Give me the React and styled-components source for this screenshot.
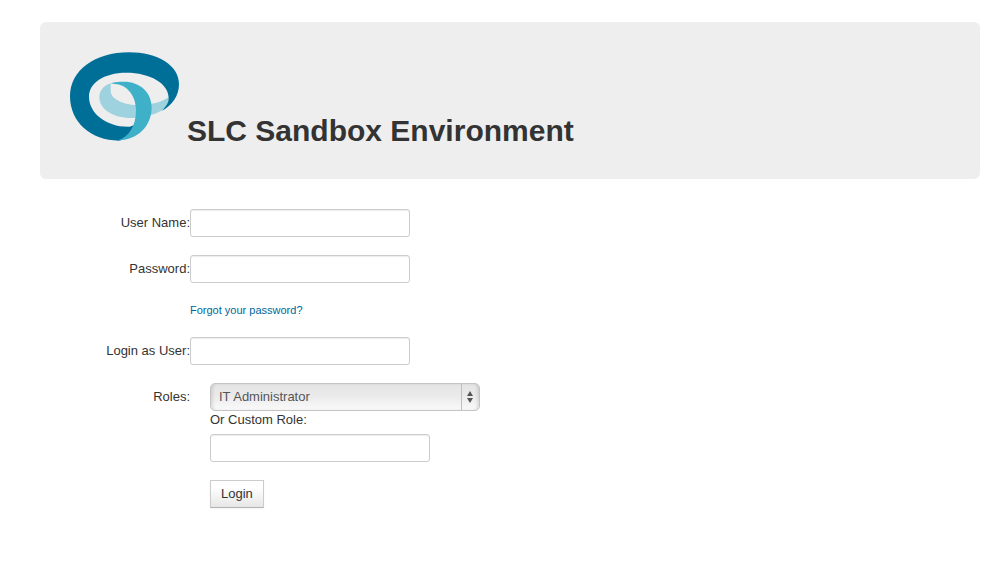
import React from 'react';
import styled, { createGlobalStyle, css } from 'styled-components';

const GlobalStyle = createGlobalStyle`
  *, *::before, *::after { box-sizing: border-box; }
  body {
    margin: 0;
    background: #fff;
    color: #333;
    font: 13px/18px "Liberation Sans", Arial, sans-serif;
  }
`;

const Page = styled.main`
  padding: 22px 27px 30px 40px;
`;

const Hero = styled.header`
  display: flex;
  align-items: flex-end;
  gap: 7px;
  padding: 30px 30px 38px;
  border-radius: 6px;
  background: #eee;
`;

const Logo = styled.svg`
  flex: none;
  width: 110px;
  height: 89px;
`;

const Title = styled.h1`
  margin: 0;
  padding-bottom: 2px;
  font-size: 30px;
  line-height: 16px;
  font-weight: bold;
`;

const Form = styled.form`
  display: flex;
  flex-direction: column;
  gap: 18px;
  margin-top: 30px;
`;

const Row = styled.div`
  display: grid;
  grid-template-columns: 150px minmax(0, 1fr);
  column-gap: ${(p) => (p.$inset ? '20px' : '0')};
  align-items: start;
`;

const Label = styled.label`
  padding-top: 5px;
  text-align: right;
`;

const Cell = styled.div`
  display: flex;
  flex-direction: column;
  align-items: flex-start;
  grid-column: 2;
`;

const field = css`
  height: 28px;
  border: 1px solid #ccc;
  color: #555;
  font: inherit;
`;

const TextInput = styled.input`
  ${field}
  width: 220px;
  max-width: 100%;
  padding: 4px;
  border-radius: 3px;
  background: #fff;
  box-shadow: inset 0 1px 1px rgba(0, 0, 0, 0.075);
`;

const ForgotLink = styled.a`
  color: #069;
  font-size: 11px;
  text-decoration: none;
`;

const SelectBox = styled.div`
  display: grid;
  width: 270px;
  max-width: 100%;
  & > * { grid-area: 1 / 1; }
`;

const Select = styled.select`
  ${field}
  appearance: none;
  width: 100%;
  padding: 0 24px 0 8px;
  border-color: #c4c4c4;
  border-radius: 5px;
  background: linear-gradient(#e4e4e4, #eaeaea 45%, #fafafa);
  box-shadow: inset 3px 0 3px -1px rgba(0, 0, 0, 0.1), inset -3px 0 3px -1px rgba(0, 0, 0, 0.1);
`;

const Stepper = styled.span`
  display: flex;
  align-items: center;
  justify-content: center;
  justify-self: end;
  width: 19px;
  height: 26px;
  margin-top: 1px;
  padding-right: 2px;
  border-left: 1px solid #bfbfbf;
  pointer-events: none;
`;

const CustomLabel = styled.label`
  margin-bottom: 5px;
`;

const LoginButton = styled.button`
  ${field}
  padding: 0 10px;
  border-bottom-color: #b3b3b3;
  color: #333;
  background: linear-gradient(#fff, #fff 25%, #e6e6e6);
  box-shadow: 0 1px 2px rgba(0, 0, 0, 0.05);
`;

function SandboxLogo() {
  return (
    <Logo viewBox="30 36 330 267" aria-hidden="true">
      <path fill="#9dd2de" d="M152 130C130 137 118 153 118 171C118 207 158 234 214 234C256 234 290 221 313 208L326 190L326 172C303 187 278 193 244 194C190 196 153 178 152 153Z" />
      <path fill="#eee" d="M154 145C149 169 178 192 226 195L222 180C213 155 184 132 164 133C158 134 155 138 154 145Z" />
      <path fill="#006f98" fillRule="evenodd" d="M207 37C292 37 357 76 357 132C357 166 338 196 306 212C320 198 326 187 326 174C326 130 270 98 199 98C130 98 87 130 87 170C87 220 140 262 209 260L225 254L210 292L177 302C92 302 30 246 30 169C30 90 105 37 207 37Z" />
      <path fill="#3eb1c9" d="M152 130C165 126 178 125 192 125C240 125 275 157 275 202C275 258 234 301 171 302C207 292 228 258 228 211C228 164 198 133 164 132Z" />
    </Logo>
  );
}

export default function App() {
  return (
    <Page>
      <GlobalStyle />
      <Hero>
        <SandboxLogo />
        <Title>SLC Sandbox Environment</Title>
      </Hero>
      <Form onSubmit={(e) => e.preventDefault()}>
        <Row>
          <Label htmlFor="username">User Name:</Label>
          <TextInput id="username" type="text" />
        </Row>
        <Row>
          <Label htmlFor="password">Password:</Label>
          <TextInput id="password" type="password" />
        </Row>
        <Row>
          <Cell>
            <ForgotLink href="#forgot">Forgot your password?</ForgotLink>
          </Cell>
        </Row>
        <Row>
          <Label htmlFor="login-as">Login as User:</Label>
          <TextInput id="login-as" type="text" />
        </Row>
        <Row $inset>
          <Label htmlFor="roles">Roles:</Label>
          <Cell>
            <SelectBox>
              <Select id="roles" defaultValue="IT Administrator">
                <option>IT Administrator</option>
              </Select>
              <Stepper>
                <svg width="6" height="12" viewBox="0 0 6 12" aria-hidden="true">
                  <path fill="#555" d="M3 0L6 5H0ZM3 12L6 7H0Z" />
                </svg>
              </Stepper>
            </SelectBox>
            <CustomLabel htmlFor="custom-role">Or Custom Role:</CustomLabel>
            <TextInput id="custom-role" type="text" />
          </Cell>
        </Row>
        <Row $inset>
          <Cell>
            <LoginButton type="submit">Login</LoginButton>
          </Cell>
        </Row>
      </Form>
    </Page>
  );
}
